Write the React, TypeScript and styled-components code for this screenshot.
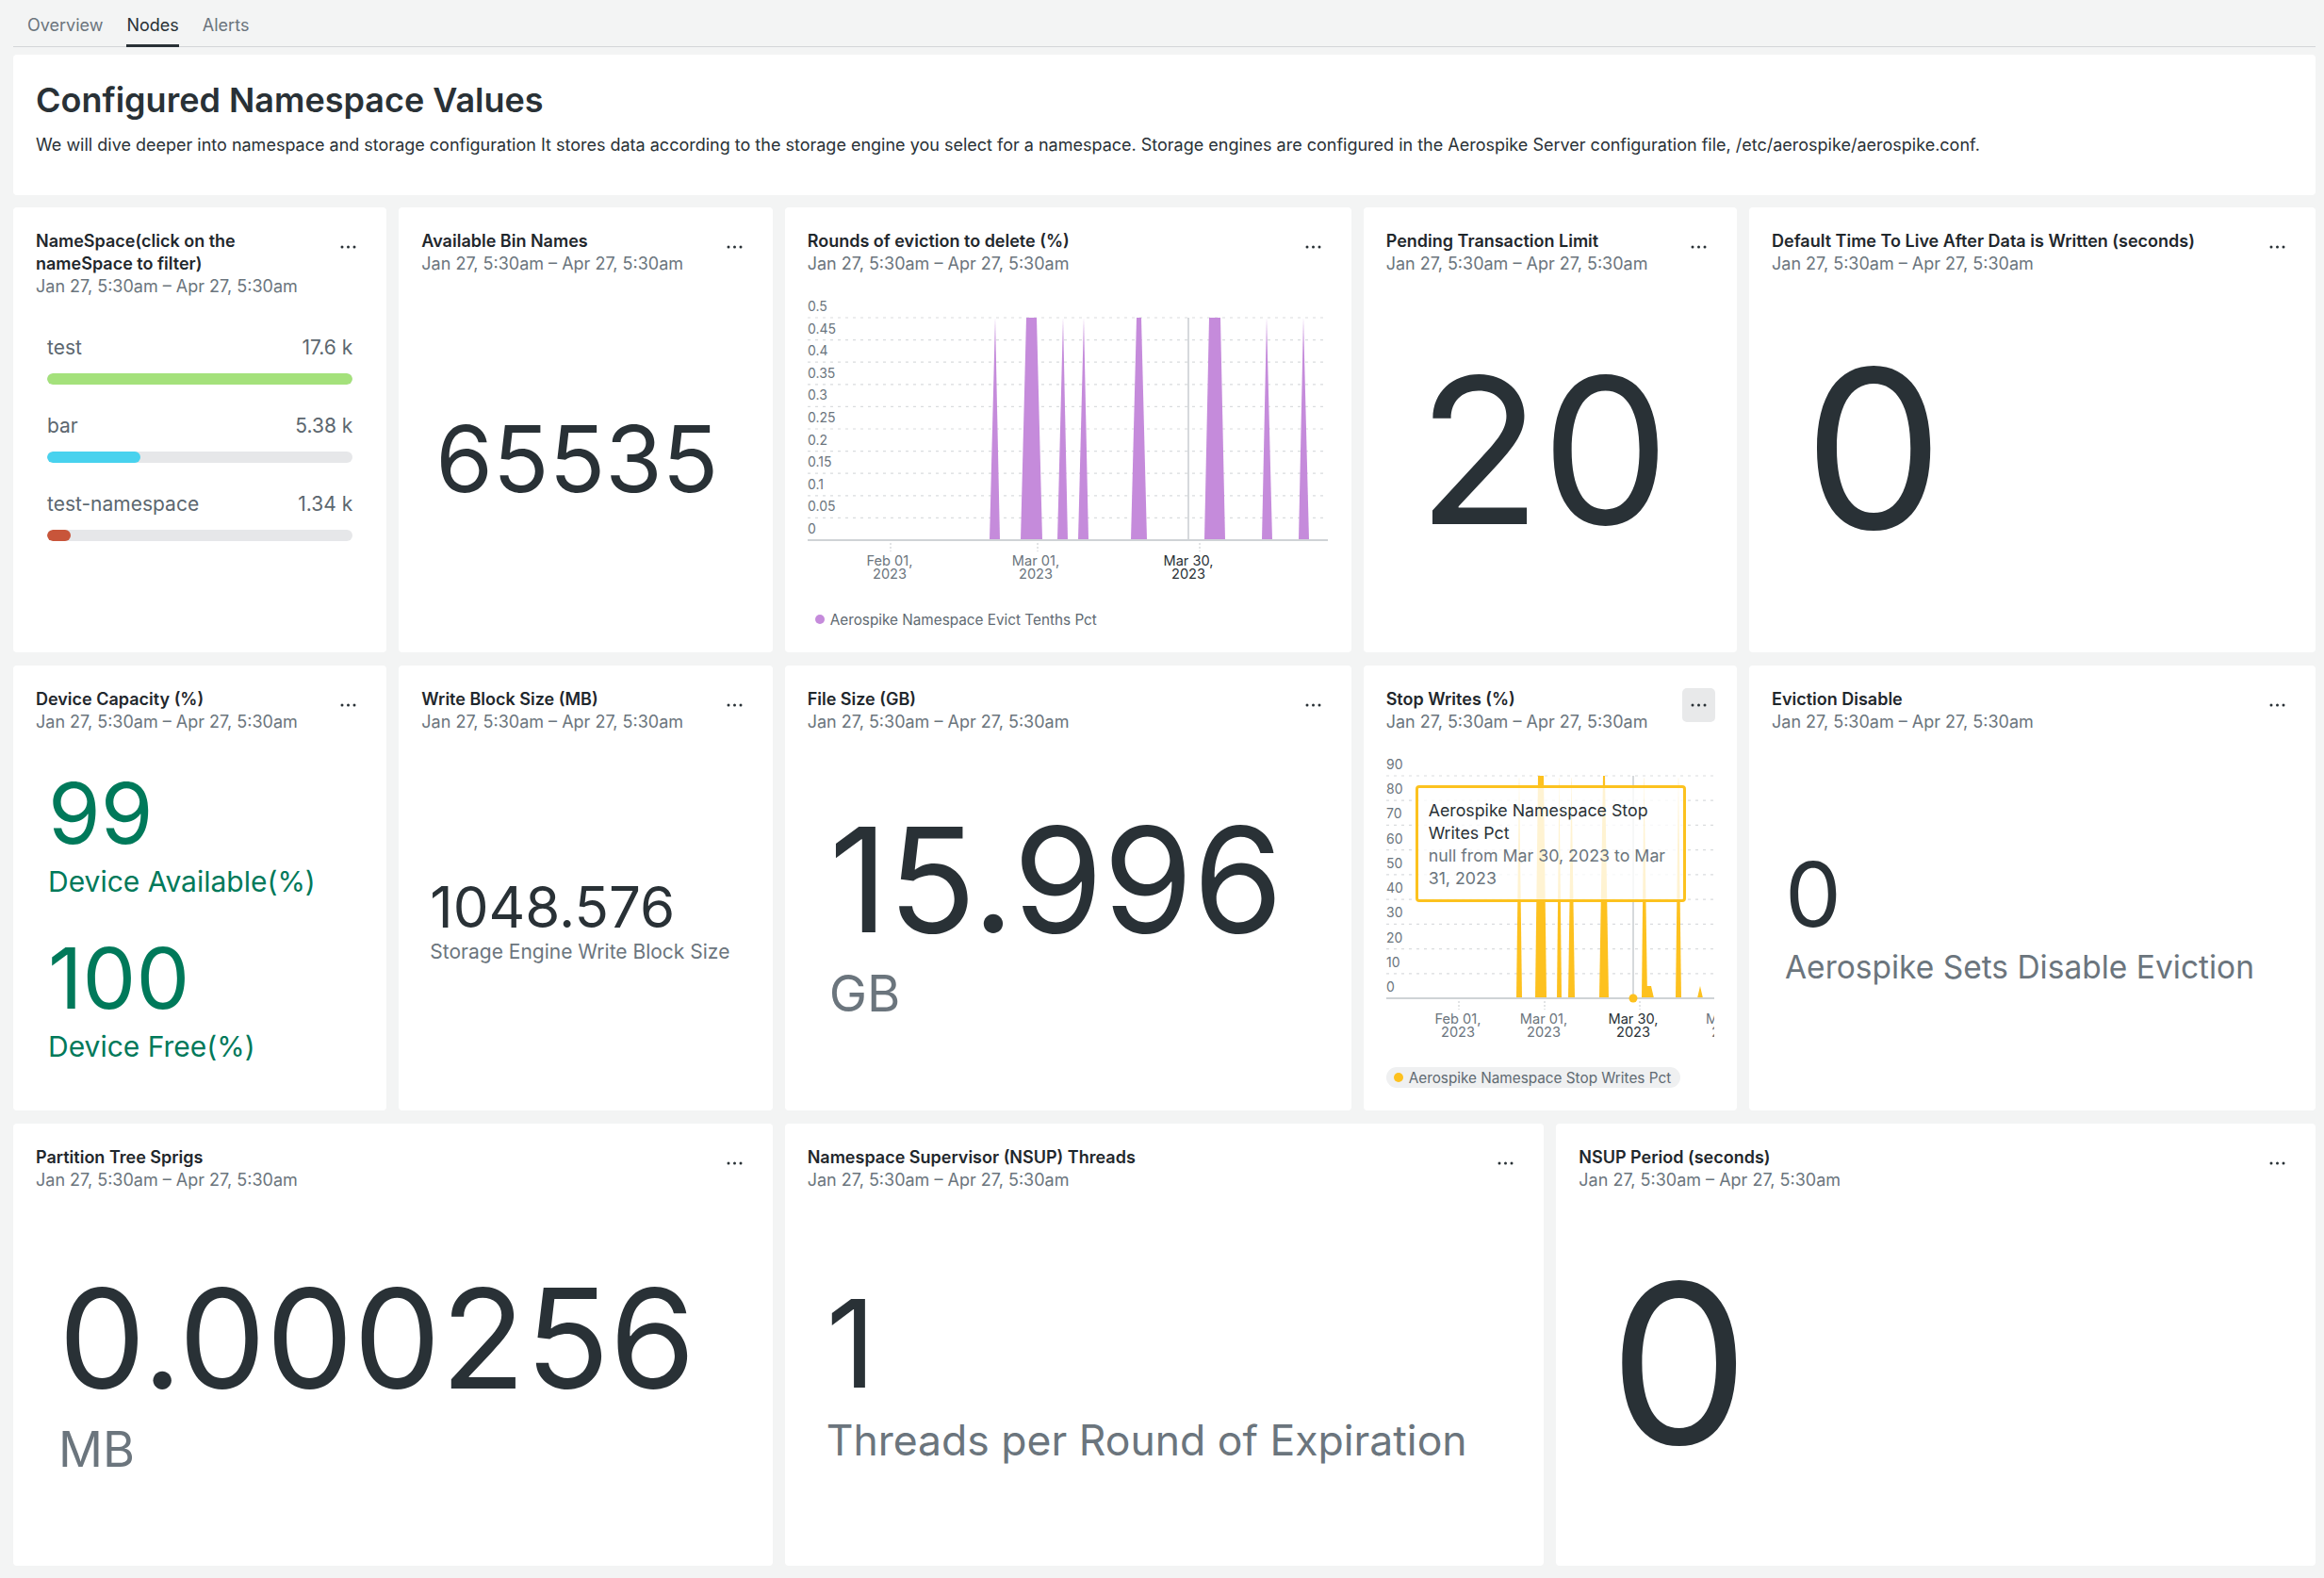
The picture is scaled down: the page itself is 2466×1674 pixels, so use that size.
import React from 'react';
import styled, { createGlobalStyle } from 'styled-components';

const DARK = '#293136';
const GRAY = '#6b757d';
const TITLE = '#1f272c';
const GREEN = '#00795a';

const Global = createGlobalStyle`
  html, body { margin: 0; padding: 0; overflow: hidden; background: #f3f4f4; }
  body { font-family: Inter, "Noto Sans", sans-serif; color: ${DARK}; }
  * { box-sizing: border-box; }
`;

const Page = styled.div`
  width: 2466px;
  height: 1674px;
  padding: 0 9px 0 14px;
  display: flex;
  flex-direction: column;
`;

const TabBar = styled.nav`
  display: flex;
  gap: 25px;
  padding-left: 15px;
  height: 50px;
  box-shadow: inset 0 -1px 0 #d3d6d8;
`;

const Tab = styled.div<{ $active?: boolean }>`
  height: 50px;
  padding-top: 16px;
  font-size: 18px;
  line-height: 22px;
  color: ${p => (p.$active ? DARK : GRAY)};
  border-bottom: 3px solid ${p => (p.$active ? DARK : 'transparent')};
`;

const HeaderCard = styled.section`
  margin-top: 8px;
  height: 149px;
  background: #fff;
  border-radius: 4px;
  padding: 26px 24px 0 24px;
`;

const PageTitle = styled.h1`
  margin: 0;
  font-size: 36px;
  line-height: 44px;
  font-weight: 600;
  color: ${DARK};
`;

const PageDesc = styled.p`
  margin: 14px 0 0 0;
  font-size: 18px;
  line-height: 24px;
  color: ${DARK};
`;

const Grid = styled.div`
  margin-top: 13px;
  display: grid;
  grid-template-columns: repeat(12, 1fr);
  grid-template-rows: 472px 472px 469px;
  column-gap: 13px;
  row-gap: 14px;
`;

const CardBox = styled.div<{ $span: number }>`
  grid-column: span ${p => p.$span};
  background: #fff;
  border-radius: 4px;
  padding: 24px;
  display: flex;
  flex-direction: column;
  min-width: 0;
  overflow: hidden;
`;

const CardHead = styled.div`
  display: flex;
  align-items: flex-start;
  gap: 12px;
`;

const HeadText = styled.div`
  flex: 1;
  min-width: 0;
`;

const CardTitle = styled.div`
  font-size: 18px;
  line-height: 24px;
  font-weight: 600;
  color: ${TITLE};
`;

const CardDate = styled.div`
  font-size: 18px;
  line-height: 24px;
  color: ${GRAY};
`;

const MenuButton = styled.button<{ $active?: boolean }>`
  flex: none;
  width: 35px;
  height: 36px;
  margin-right: -1px;
  padding: 0;
  border: 0;
  border-radius: 5px;
  background: ${p => (p.$active ? '#e8e9ea' : 'transparent')};
  display: flex;
  align-items: center;
  justify-content: center;
`;

const Body = styled.div`
  flex: 1;
  min-height: 0;
  position: relative;
`;

const Figure = styled.div<{ $top: number; $left: number }>`
  padding: ${p => p.$top}px 0 0 ${p => p.$left}px;
  display: flex;
  flex-direction: column;
  align-items: flex-start;
`;

const BigValue = styled.div<{ $size: number; $color?: string; $gap?: number }>`
  font-size: ${p => p.$size}px;
  line-height: 1;
  margin-top: ${p => p.$gap ?? 0}px;
  color: ${p => p.$color ?? DARK};
  white-space: nowrap;
`;

const Caption = styled.div<{ $size: number; $gap: number; $color?: string }>`
  font-size: ${p => p.$size}px;
  line-height: 1.2;
  margin-top: ${p => p.$gap}px;
  color: ${p => p.$color ?? GRAY};
  white-space: nowrap;
`;

/* namespace list */
const NsList = styled.div`
  padding: 39px 12px 0 12px;
  display: flex;
  flex-direction: column;
  gap: 30px;
`;

const NsRow = styled.div`
  display: flex;
  flex-direction: column;
`;

const NsLine = styled.div`
  display: flex;
  justify-content: space-between;
  font-size: 21px;
  line-height: 28px;
  color: #5c676f;
`;

const Track = styled.div`
  margin-top: 13px;
  height: 12px;
  border-radius: 6px;
  background: #e6e7e9;
  overflow: hidden;
`;

const Fill = styled.div<{ $color: string }>`
  height: 100%;
  border-radius: 6px;
  background: ${p => p.$color};
`;

/* charts */
const ChartWrap = styled.div`
  position: relative;
  margin-top: 16px;
`;

const ChartSvg = styled.svg`
  display: block;
  overflow: hidden;
  font-family: Inter, "Noto Sans", sans-serif;
`;

const Legend = styled.div<{ $bg?: string }>`
  margin-top: 8px;
  align-self: flex-start;
  display: inline-flex;
  align-items: center;
  gap: 6px;
  height: 22px;
  padding: 0 10px 0 8px;
  border-radius: 11px;
  background: ${p => p.$bg ?? 'transparent'};
  font-size: 15.3px;
  color: #5f6a72;
  white-space: nowrap;
`;

const LegendDot = styled.span<{ $color: string }>`
  width: 10px;
  height: 10px;
  border-radius: 50%;
  background: ${p => p.$color};
`;

const Tooltip = styled.div`
  position: absolute;
  left: 31px;
  top: 39px;
  width: 287px;
  height: 124px;
  border: 3px solid #fcc21f;
  border-radius: 4px;
  background: rgba(255, 255, 255, 0.8);
  padding: 12px 8px 0 11px;
`;

const TipLine = styled.div<{ $muted?: boolean }>`
  font-size: 17.8px;
  line-height: 24px;
  color: ${p => (p.$muted ? GRAY : DARK)};
  white-space: nowrap;
`;

const Dots = () => (
  <svg width="17" height="4" viewBox="0 0 17 4">
    <circle cx="2" cy="2" r="1.5" fill={DARK} />
    <circle cx="8.5" cy="2" r="1.5" fill={DARK} />
    <circle cx="15" cy="2" r="1.5" fill={DARK} />
  </svg>
);

const DATE = 'Jan 27, 5:30am – Apr 27, 5:30am';

interface CardProps {
  span: number;
  title: React.ReactNode;
  active?: boolean;
  children?: React.ReactNode;
}

const Card = ({ span, title, active, children }: CardProps) => (
  <CardBox $span={span}>
    <CardHead>
      <HeadText>
        <CardTitle>{title}</CardTitle>
        <CardDate>{DATE}</CardDate>
      </HeadText>
      <MenuButton $active={active} aria-label="more">
        <Dots />
      </MenuButton>
    </CardHead>
    <Body>{children}</Body>
  </CardBox>
);

type XLabel = { x: number; lines: [string, string]; active?: boolean; start?: boolean };

interface ChartProps {
  width: number;
  yLabels: string[];
  polys: string[];
  color: string;
  xLabels: XLabel[];
  ticks: number[];
  hoverX: number;
  hoverDot?: boolean;
}

const TOP = 29;
const BASE = 265;

const AxisChart = ({ width, yLabels, polys, color, xLabels, ticks, hoverX, hoverDot }: ChartProps) => {
  const n = yLabels.length - 1;
  const step = (BASE - TOP) / n;
  return (
    <ChartSvg width={width} height={330} viewBox={`0 0 ${width} 330`}>
      {yLabels.map((l, i) => {
        const y = TOP + i * step;
        return (
          <g key={l}>
            {i < n && (
              <line x1={0} x2={width} y1={y} y2={y} stroke="#d9dcde" strokeWidth={1.2} strokeDasharray="3 5" />
            )}
            <text x={0} y={y - 7} fontSize={14} fill={GRAY}>
              {l}
            </text>
          </g>
        );
      })}
      <line x1={hoverX} x2={hoverX} y1={TOP} y2={BASE} stroke="#c9cdd0" strokeWidth={1.5} />
      {polys.map((p, i) => (
        <polygon key={i} points={p} fill={color} />
      ))}
      <line x1={0} x2={width} y1={BASE} y2={BASE} stroke="#cfd3d6" strokeWidth={2} />
      {ticks.map(t => (
        <line key={t} x1={t} x2={t} y1={BASE + 3} y2={BASE + 12} stroke="#c4c8cb" strokeWidth={1} strokeDasharray="2 2" />
      ))}
      {hoverDot && <circle cx={hoverX} cy={BASE} r={4.5} fill={color} />}
      {xLabels.map(l => (
        <text
          key={l.x}
          x={l.x}
          fontSize={14.6}
          textAnchor={l.start ? 'start' : 'middle'}
          fill={l.active ? DARK : GRAY}
        >
          <tspan x={l.x} y={292}>
            {l.lines[0]}
          </tspan>
          <tspan x={l.start ? l.x + 6 : l.x} y={306}>
            {l.lines[1]}
          </tspan>
        </text>
      ))}
    </ChartSvg>
  );
};

const spike = (a: number, b: number, c: number, d: number, top = TOP) =>
  `${a},${BASE} ${b},${top} ${c},${top} ${d},${BASE}`;

const evictPolys = [
  spike(193, 199, 199, 204),
  spike(226, 232, 243, 249),
  spike(265, 271, 271, 276),
  spike(287, 293, 293, 298),
  spike(343, 349, 354, 360),
  spike(421, 426, 438, 443),
  spike(482, 487, 487, 493),
  spike(521, 526, 526, 532),
];

const stopPolys = [
  spike(138, 141, 141, 144),
  spike(158, 161, 167, 170),
  spike(181, 183.5, 183.5, 186),
  spike(193, 196.5, 196.5, 200),
  spike(226, 230, 232, 236),
  spike(271, 273.5, 273.5, 277),
  spike(276, 276, 281, 284, 252),
  spike(307, 310, 310, 313),
  spike(330, 333, 333, 336, 252),
];

const namespaces = [
  { name: 'test', value: '17.6 k', n: 17.6, color: '#a4e17b' },
  { name: 'bar', value: '5.38 k', n: 5.38, color: '#48d2ee' },
  { name: 'test-namespace', value: '1.34 k', n: 1.34, color: '#c8553a' },
];

export default function App() {
  const max = 17.6;
  return (
    <>
      <Global />
      <Page>
        <TabBar>
          <Tab>Overview</Tab>
          <Tab $active>Nodes</Tab>
          <Tab>Alerts</Tab>
        </TabBar>

        <HeaderCard>
          <PageTitle>Configured Namespace Values</PageTitle>
          <PageDesc>
            We will dive deeper into namespace and storage configuration It stores data according to the storage
            engine you select for a namespace. Storage engines are configured in the Aerospike Server configuration
            file, /etc/aerospike/aerospike.conf.
          </PageDesc>
        </HeaderCard>

        <Grid>
          {/* Row 1 */}
          <Card
            span={2}
            title={
              <>
                NameSpace(click on the
                <br />
                nameSpace to filter)
              </>
            }
          >
            <NsList>
              {namespaces.map(ns => (
                <NsRow key={ns.name}>
                  <NsLine>
                    <span>{ns.name}</span>
                    <span>{ns.value}</span>
                  </NsLine>
                  <Track>
                    <Fill $color={ns.color} style={{ width: `${(ns.n / max) * 100}%` }} />
                  </Track>
                </NsRow>
              ))}
            </NsList>
          </Card>

          <Card span={2} title="Available Bin Names">
            <Figure $top={146} $left={15}>
              <BigValue $size={98}>65535</BigValue>
            </Figure>
          </Card>

          <Card span={3} title="Rounds of eviction to delete (%)">
            <ChartWrap>
              <AxisChart
                width={552}
                yLabels={['0.5', '0.45', '0.4', '0.35', '0.3', '0.25', '0.2', '0.15', '0.1', '0.05', '0']}
                polys={evictPolys}
                color="#c58bdb"
                xLabels={[
                  { x: 87, lines: ['Feb 01,', '2023'] },
                  { x: 242, lines: ['Mar 01,', '2023'] },
                  { x: 404, lines: ['Mar 30,', '2023'], active: true },
                ]}
                ticks={[88, 244, 416]}
                hoverX={404}
              />
            </ChartWrap>
            <Legend>
              <LegendDot $color="#c58bdb" />
              Aerospike Namespace Evict Tenths Pct
            </Legend>
          </Card>

          <Card span={2} title="Pending Transaction Limit">
            <Figure $top={78} $left={33}>
              <BigValue $size={216}>20</BigValue>
            </Figure>
          </Card>

          <Card span={3} title="Default Time To Live After Data is Written (seconds)">
            <Figure $top={66} $left={34}>
              <BigValue $size={235}>0</BigValue>
            </Figure>
          </Card>

          {/* Row 2 */}
          <Card span={2} title="Device Capacity (%)">
            <Figure $top={40} $left={13}>
              <BigValue $size={90} $color={GREEN}>
                99
              </BigValue>
              <Caption $size={30} $gap={9} $color={GREEN}>
                Device Available(%)
              </Caption>
              <BigValue $size={90} $color={GREEN} $gap={40}>
                100
              </BigValue>
              <Caption $size={30} $gap={9} $color={GREEN}>
                Device Free(%)
              </Caption>
            </Figure>
          </Card>

          <Card span={2} title="Write Block Size (MB)">
            <Figure $top={154} $left={9}>
              <BigValue $size={60}>1048.576</BigValue>
              <Caption $size={21} $gap={5}>
                Storage Engine Write Block Size
              </Caption>
            </Figure>
          </Card>

          <Card span={3} title="File Size (GB)">
            <Figure $top={78} $left={23}>
              <BigValue $size={154}>15.996</BigValue>
              <Caption $size={54} $gap={12}>
                GB
              </Caption>
            </Figure>
          </Card>

          <Card span={2} title="Stop Writes (%)" active>
            <ChartWrap>
              <AxisChart
                width={348}
                yLabels={['90', '80', '70', '60', '50', '40', '30', '20', '10', '0']}
                polys={stopPolys}
                color="#fdc11f"
                xLabels={[
                  { x: 76, lines: ['Feb 01,', '2023'] },
                  { x: 167, lines: ['Mar 01,', '2023'] },
                  { x: 262, lines: ['Mar 30,', '2023'], active: true },
                  { x: 339, lines: ['Mar 31,', '2023'], start: true },
                ]}
                ticks={[77, 168, 269]}
                hoverX={262}
                hoverDot
              />
              <Tooltip>
                <TipLine>Aerospike Namespace Stop</TipLine>
                <TipLine>Writes Pct</TipLine>
                <TipLine $muted>null from Mar 30, 2023 to Mar</TipLine>
                <TipLine $muted>31, 2023</TipLine>
              </Tooltip>
            </ChartWrap>
            <Legend $bg="#eff0f1">
              <LegendDot $color="#fdc11f" />
              Aerospike Namespace Stop Writes Pct
            </Legend>
          </Card>

          <Card span={3} title="Eviction Disable">
            <Figure $top={123} $left={14}>
              <BigValue $size={95}>0</BigValue>
              <Caption $size={33.5} $gap={10}>
                Aerospike Sets Disable Eviction
              </Caption>
            </Figure>
          </Card>

          {/* Row 3 */}
          <Card span={4} title="Partition Tree Sprigs">
            <Figure $top={82} $left={24}>
              <BigValue $size={147}>0.000256</BigValue>
              <Caption $size={52} $gap={14}>
                MB
              </Caption>
            </Figure>
          </Card>

          <Card span={4} title="Namespace Supervisor (NSUP) Threads">
            <Figure $top={97} $left={20}>
              <BigValue $size={129}>1</BigValue>
              <Caption $size={44.5} $gap={12}>
                Threads per Round of Expiration
              </Caption>
            </Figure>
          </Card>

          <Card span={4} title="NSUP Period (seconds)">
            <Figure $top={64} $left={32}>
              <BigValue $size={236}>0</BigValue>
            </Figure>
          </Card>
        </Grid>
      </Page>
    </>
  );
}
